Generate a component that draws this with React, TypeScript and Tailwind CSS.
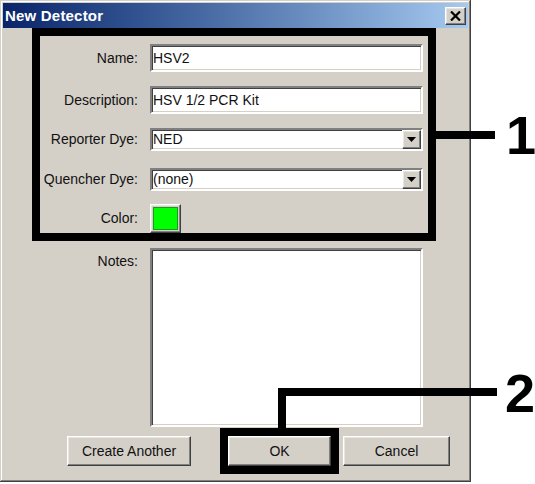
import clsx from 'clsx';

const sunken =
  'border-2 border-t-[#808080] border-l-[#808080] border-b-white border-r-white shadow-[inset_1px_1px_#404040,inset_-1px_-1px_#d4d0c8]';
const raised =
  'border border-t-white border-l-white border-b-[#404040] border-r-[#404040] shadow-[inset_-1px_-1px_#808080,inset_1px_1px_#e8e6e0]';

function Field({ label, value }: { label: string; value: string }) {
  return (
    <div className="flex items-center">
      <span className="w-[98px] text-right">{label}</span>
      <div className={clsx(sunken, 'ml-[12px] w-[273px] h-[28px] bg-white flex items-center pl-[1px]')}>{value}</div>
    </div>
  );
}

function Combo({ label, value }: { label: string; value: string }) {
  return (
    <div className="flex items-center">
      <span className="w-[98px] text-right">{label}</span>
      <div className={clsx(sunken, 'ml-[12px] w-[273px] h-[23px] bg-white flex items-center justify-between pl-[1px]')}>
        <span>{value}</span>
        <div className={clsx(raised, 'w-[19px] h-[19px] bg-[#d4d0c8] flex items-center justify-center')}>
          <svg width="9" height="5" viewBox="0 0 9 5">
            <path d="M0 0h9L4.5 5z" fill="#000" />
          </svg>
        </div>
      </div>
    </div>
  );
}

function Button({ label, className }: { label: string; className?: string }) {
  return (
    <div className={clsx(raised, 'h-[30px] bg-[#d4d0c8] flex items-center justify-center', className)}>{label}</div>
  );
}

export default function App() {
  return (
    <div className="relative w-[535px] h-[484px] bg-white overflow-hidden font-['Liberation_Sans',Arial,sans-serif] text-[14px] text-[#111]">
      <div className="w-[471px] h-[482px] bg-[#d4d0c8] p-[3px] flex flex-col shadow-[inset_-1px_-1px_#404040,inset_1px_1px_#d4d0c8,inset_-2px_-2px_#808080,inset_2px_2px_#fff]">
        {/* title bar */}
        <div className="h-[25px] shrink-0 flex items-center justify-between pl-[2px] pr-[2px] bg-linear-to-r from-[#0a246a] to-[#a6caf0]">
          <span className="text-white font-bold text-[15px] leading-none tracking-[0.2px]">New Detector</span>
          <div className={clsx(raised, 'w-[21px] h-[18px] bg-[#d4d0c8] flex items-center justify-center')}>
            <svg width="11" height="10" viewBox="0 0 11 10">
              <path d="M1 0.5L10 9.5M10 0.5L1 9.5" stroke="#000" strokeWidth="2.2" />
            </svg>
          </div>
        </div>

        {/* highlighted fields (1) */}
        <div className="ml-[29px] w-[404px] border-8 border-black pt-[8px] flex flex-col">
          <Field label="Name:" value="HSV2" />
          <div className="mt-[14px]">
            <Field label="Description:" value="HSV 1/2 PCR Kit" />
          </div>
          <div className="mt-[14px]">
            <Combo label="Reporter Dye:" value="NED" />
          </div>
          <div className="mt-[17px]">
            <Combo label="Quencher Dye:" value="(none)" />
          </div>
          <div className="mt-[13px] flex items-center">
            <span className="w-[98px] text-right">Color:</span>
            <div className={clsx(raised, 'ml-[12px] w-[31px] h-[29px] bg-[#d4d0c8] p-[2px]')}>
              <div className="w-full h-full bg-[#00ff00] shadow-[inset_-1px_-1px_#1a9a1a,inset_1px_1px_#1a9a1a]" />
            </div>
          </div>
        </div>

        {/* notes */}
        <div className="mt-[7px] flex items-start">
          <span className="w-[135px] text-right mt-[3px]">Notes:</span>
          <div className={clsx(sunken, 'ml-[12px] w-[273px] h-[179px] bg-white')} />
        </div>

        {/* buttons */}
        <div className="mt-[9px] flex">
          <Button label="Create Another" className="ml-[64px] w-[124px]" />
          <Button label="OK" className="ml-[37px] w-[103px] outline-8 outline-black outline-solid" />
          <Button label="Cancel" className="ml-[12px] w-[107px]" />
        </div>
      </div>

      {/* annotation lines */}
      <div className="absolute left-[436px] top-[131px] w-[59px] h-[8px] bg-black" />
      <div className="absolute left-[278px] top-[388px] w-[219px] h-[8px] bg-black" />
      <div className="absolute left-[278px] top-[388px] w-[8px] h-[40px] bg-black" />

      <span className="absolute left-[506px] top-[108px] text-[54px] font-bold leading-none text-black">1</span>
      <span className="absolute right-0 top-[366px] text-[54px] font-bold leading-none text-black">2</span>
    </div>
  );
}
